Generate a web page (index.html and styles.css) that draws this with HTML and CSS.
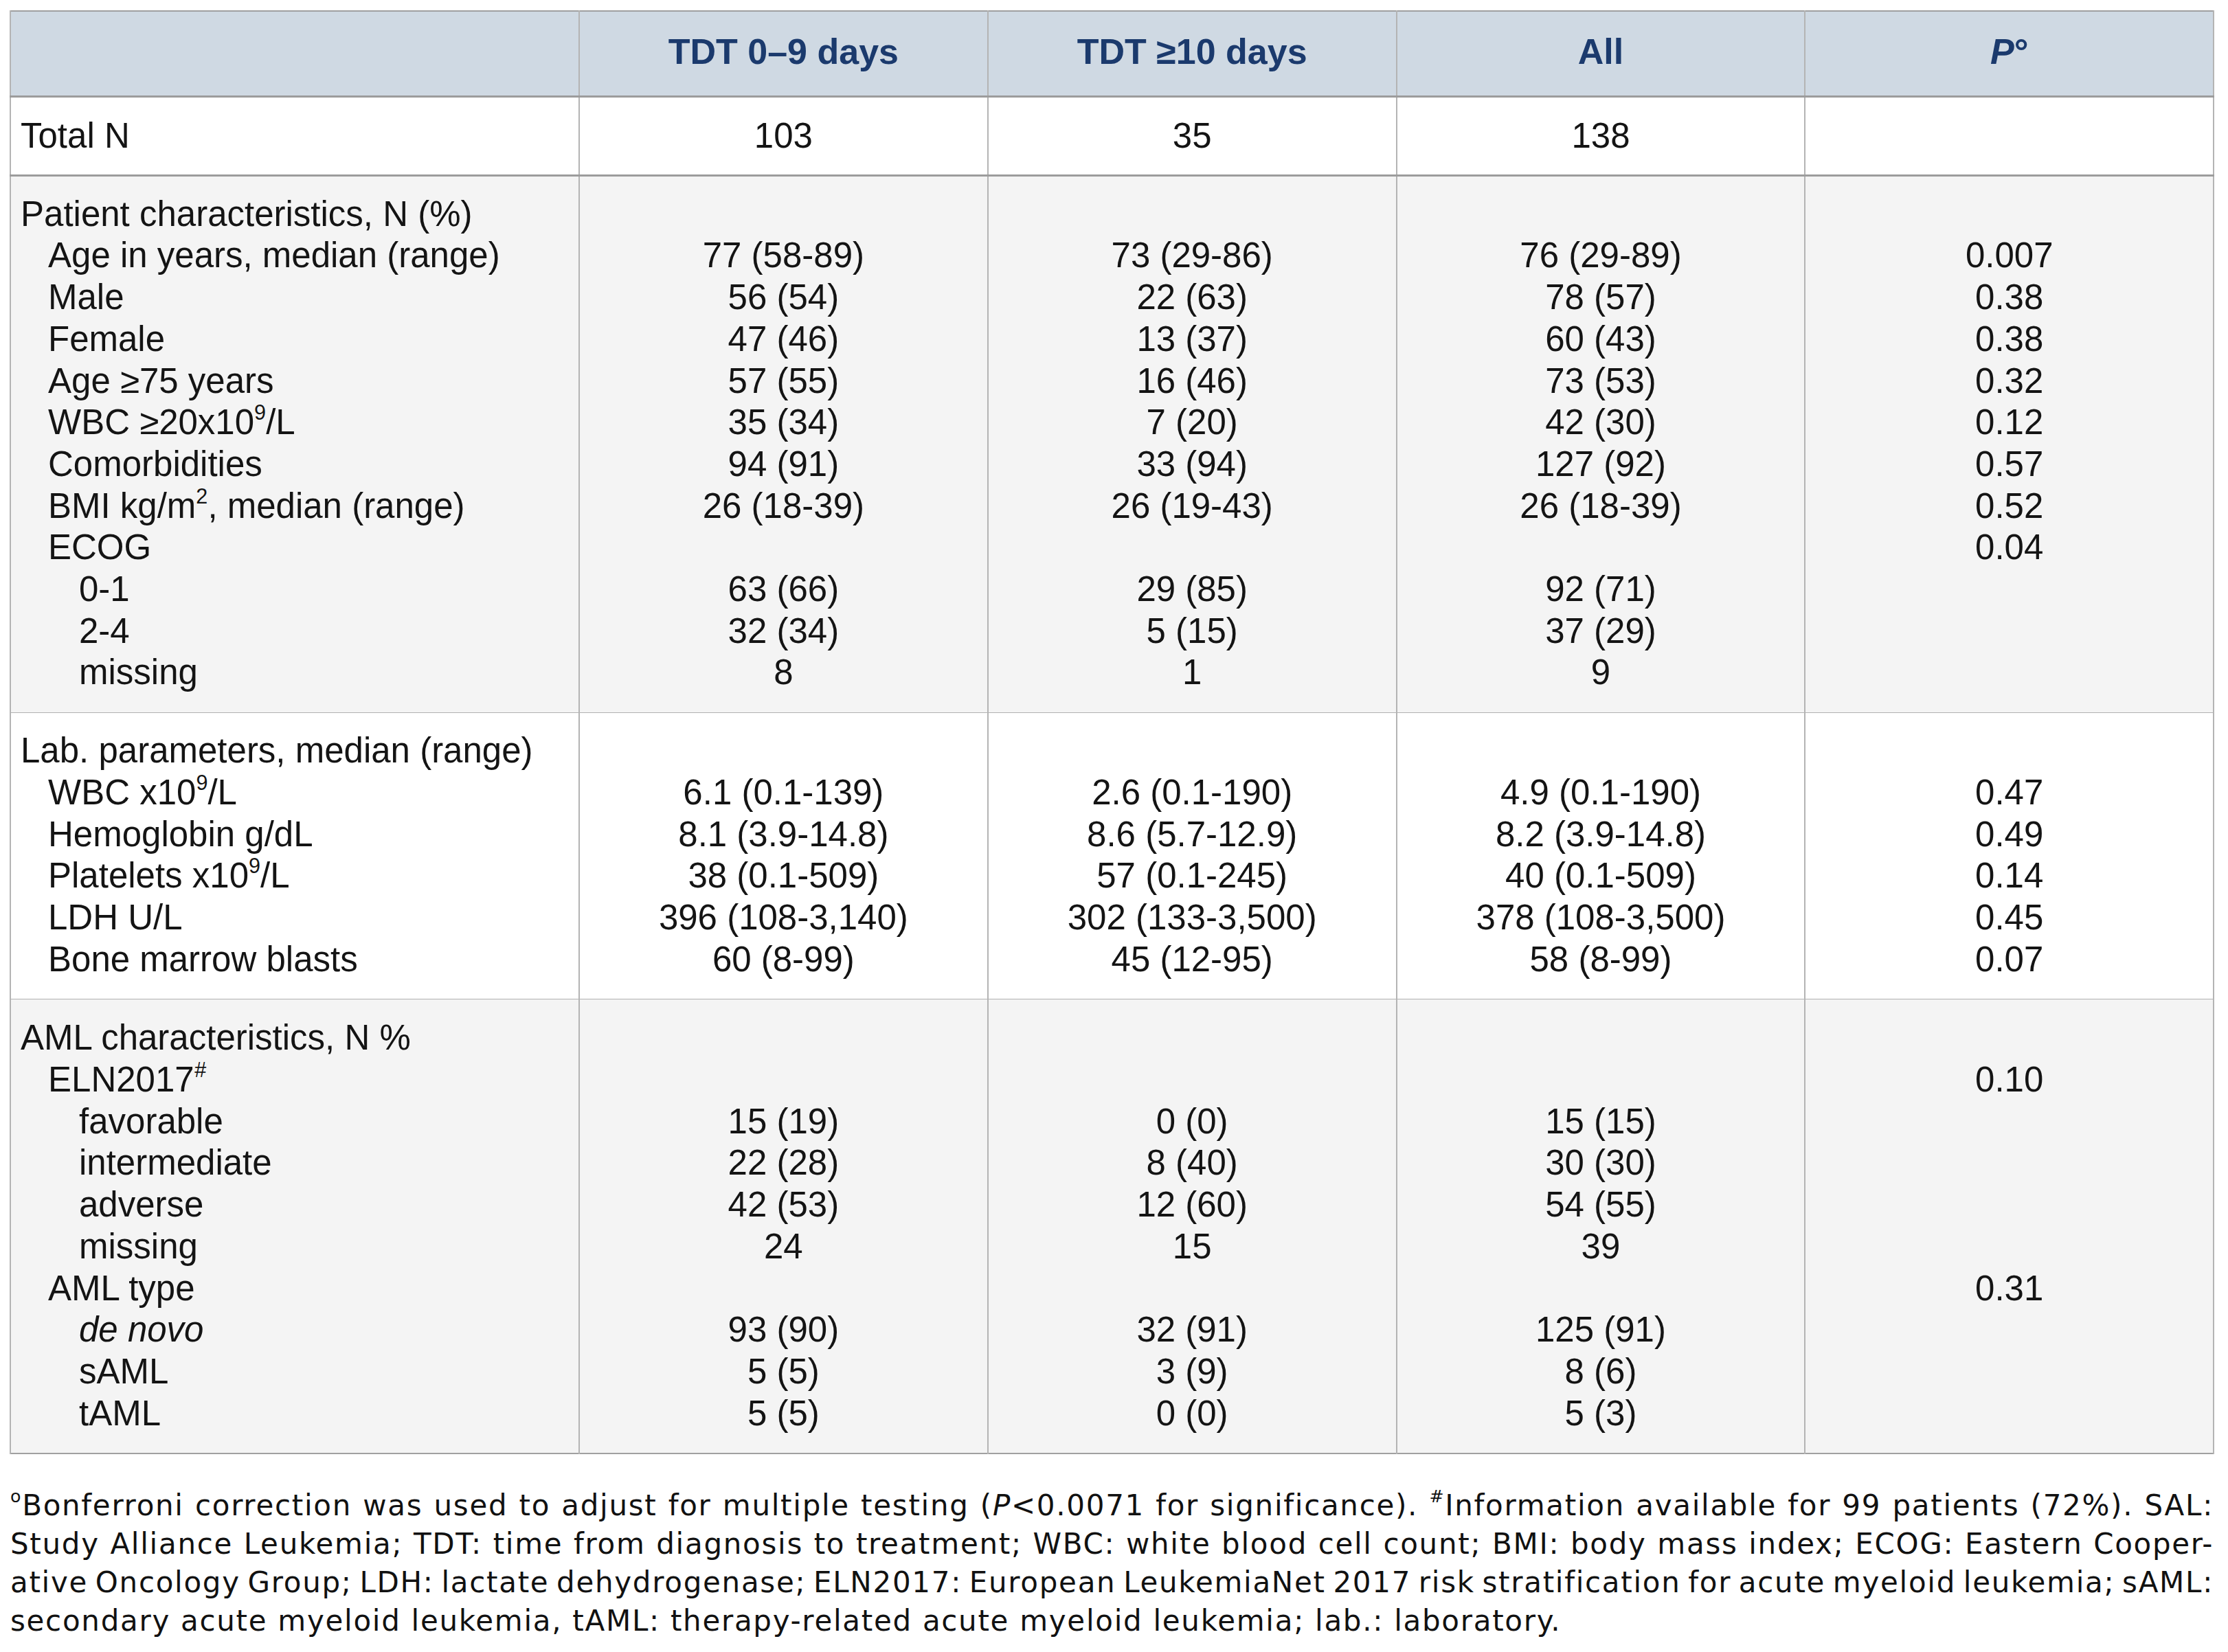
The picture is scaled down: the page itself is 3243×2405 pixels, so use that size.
FILE: index.html
```html
<!DOCTYPE html>
<html lang="en">
<head>
<meta charset="utf-8">
<title>Table</title>
<link rel="stylesheet" href="styles.css">
</head>
<body>
<div class="page">
<table class="data">
  <colgroup>
    <col class="c-label"><col class="c-val"><col class="c-val"><col class="c-val"><col class="c-val">
  </colgroup>
  <thead>
    <tr class="head">
      <th></th>
      <th>TDT 0–9 days</th>
      <th>TDT ≥10 days</th>
      <th>All</th>
      <th><i>P</i>°</th>
    </tr>
  </thead>
  <tbody>
    <tr class="total">
      <td class="label">Total N</td>
      <td>103</td><td>35</td><td>138</td><td></td>
    </tr>
    <tr class="section shaded">
      <td class="label">
        <div class="ln">Patient characteristics, N (%)</div>
        <div class="ln l1">Age in years, median (range)</div>
        <div class="ln l1">Male</div>
        <div class="ln l1">Female</div>
        <div class="ln l1">Age ≥75 years</div>
        <div class="ln l1">WBC ≥20x10<sup class="sup">9</sup>/L</div>
        <div class="ln l1">Comorbidities</div>
        <div class="ln l1">BMI kg/m<sup class="sup">2</sup>, median (range)</div>
        <div class="ln l1">ECOG</div>
        <div class="ln l2">0-1</div>
        <div class="ln l2">2-4</div>
        <div class="ln l2">missing</div>
      </td>
      <td>
        <div class="ln">&nbsp;</div>
        <div class="ln">77 (58-89)</div>
        <div class="ln">56 (54)</div>
        <div class="ln">47 (46)</div>
        <div class="ln">57 (55)</div>
        <div class="ln">35 (34)</div>
        <div class="ln">94 (91)</div>
        <div class="ln">26 (18-39)</div>
        <div class="ln">&nbsp;</div>
        <div class="ln">63 (66)</div>
        <div class="ln">32 (34)</div>
        <div class="ln">8</div>
      </td>
      <td>
        <div class="ln">&nbsp;</div>
        <div class="ln">73 (29-86)</div>
        <div class="ln">22 (63)</div>
        <div class="ln">13 (37)</div>
        <div class="ln">16 (46)</div>
        <div class="ln">7 (20)</div>
        <div class="ln">33 (94)</div>
        <div class="ln">26 (19-43)</div>
        <div class="ln">&nbsp;</div>
        <div class="ln">29 (85)</div>
        <div class="ln">5 (15)</div>
        <div class="ln">1</div>
      </td>
      <td>
        <div class="ln">&nbsp;</div>
        <div class="ln">76 (29-89)</div>
        <div class="ln">78 (57)</div>
        <div class="ln">60 (43)</div>
        <div class="ln">73 (53)</div>
        <div class="ln">42 (30)</div>
        <div class="ln">127 (92)</div>
        <div class="ln">26 (18-39)</div>
        <div class="ln">&nbsp;</div>
        <div class="ln">92 (71)</div>
        <div class="ln">37 (29)</div>
        <div class="ln">9</div>
      </td>
      <td>
        <div class="ln">&nbsp;</div>
        <div class="ln">0.007</div>
        <div class="ln">0.38</div>
        <div class="ln">0.38</div>
        <div class="ln">0.32</div>
        <div class="ln">0.12</div>
        <div class="ln">0.57</div>
        <div class="ln">0.52</div>
        <div class="ln">0.04</div>
        <div class="ln">&nbsp;</div>
        <div class="ln">&nbsp;</div>
        <div class="ln">&nbsp;</div>
      </td>
    </tr>
    <tr class="section">
      <td class="label">
        <div class="ln">Lab. parameters, median (range)</div>
        <div class="ln l1">WBC x10<sup class="sup">9</sup>/L</div>
        <div class="ln l1">Hemoglobin g/dL</div>
        <div class="ln l1">Platelets x10<sup class="sup">9</sup>/L</div>
        <div class="ln l1">LDH U/L</div>
        <div class="ln l1">Bone marrow blasts</div>
      </td>
      <td>
        <div class="ln">&nbsp;</div>
        <div class="ln">6.1 (0.1-139)</div>
        <div class="ln">8.1 (3.9-14.8)</div>
        <div class="ln">38 (0.1-509)</div>
        <div class="ln">396 (108-3,140)</div>
        <div class="ln">60 (8-99)</div>
      </td>
      <td>
        <div class="ln">&nbsp;</div>
        <div class="ln">2.6 (0.1-190)</div>
        <div class="ln">8.6 (5.7-12.9)</div>
        <div class="ln">57 (0.1-245)</div>
        <div class="ln">302 (133-3,500)</div>
        <div class="ln">45 (12-95)</div>
      </td>
      <td>
        <div class="ln">&nbsp;</div>
        <div class="ln">4.9 (0.1-190)</div>
        <div class="ln">8.2 (3.9-14.8)</div>
        <div class="ln">40 (0.1-509)</div>
        <div class="ln">378 (108-3,500)</div>
        <div class="ln">58 (8-99)</div>
      </td>
      <td>
        <div class="ln">&nbsp;</div>
        <div class="ln">0.47</div>
        <div class="ln">0.49</div>
        <div class="ln">0.14</div>
        <div class="ln">0.45</div>
        <div class="ln">0.07</div>
      </td>
    </tr>
    <tr class="section shaded">
      <td class="label">
        <div class="ln">AML characteristics, N %</div>
        <div class="ln l1">ELN2017<sup class="sup hash">#</sup></div>
        <div class="ln l2">favorable</div>
        <div class="ln l2">intermediate</div>
        <div class="ln l2">adverse</div>
        <div class="ln l2">missing</div>
        <div class="ln l1">AML type</div>
        <div class="ln l2"><i>de novo</i></div>
        <div class="ln l2">sAML</div>
        <div class="ln l2">tAML</div>
      </td>
      <td>
        <div class="ln">&nbsp;</div>
        <div class="ln">&nbsp;</div>
        <div class="ln">15 (19)</div>
        <div class="ln">22 (28)</div>
        <div class="ln">42 (53)</div>
        <div class="ln">24</div>
        <div class="ln">&nbsp;</div>
        <div class="ln">93 (90)</div>
        <div class="ln">5 (5)</div>
        <div class="ln">5 (5)</div>
      </td>
      <td>
        <div class="ln">&nbsp;</div>
        <div class="ln">&nbsp;</div>
        <div class="ln">0 (0)</div>
        <div class="ln">8 (40)</div>
        <div class="ln">12 (60)</div>
        <div class="ln">15</div>
        <div class="ln">&nbsp;</div>
        <div class="ln">32 (91)</div>
        <div class="ln">3 (9)</div>
        <div class="ln">0 (0)</div>
      </td>
      <td>
        <div class="ln">&nbsp;</div>
        <div class="ln">&nbsp;</div>
        <div class="ln">15 (15)</div>
        <div class="ln">30 (30)</div>
        <div class="ln">54 (55)</div>
        <div class="ln">39</div>
        <div class="ln">&nbsp;</div>
        <div class="ln">125 (91)</div>
        <div class="ln">8 (6)</div>
        <div class="ln">5 (3)</div>
      </td>
      <td>
        <div class="ln">&nbsp;</div>
        <div class="ln">0.10</div>
        <div class="ln">&nbsp;</div>
        <div class="ln">&nbsp;</div>
        <div class="ln">&nbsp;</div>
        <div class="ln">&nbsp;</div>
        <div class="ln">0.31</div>
        <div class="ln">&nbsp;</div>
        <div class="ln">&nbsp;</div>
        <div class="ln">&nbsp;</div>
      </td>
    </tr>
  </tbody>
</table>
<div class="notes">
  <span class="nl"><sup class="nsup">o</sup>Bonferroni correction was used to adjust for multiple testing (<i>P</i>&lt;0.0071 for significance). <sup class="nsup">#</sup>Information available for 99 patients (72%). SAL:</span>
  <span class="nl">Study Alliance Leukemia; TDT: time from diagnosis to treatment; WBC: white blood cell count; BMI: body mass index; ECOG: Eastern Cooper-</span>
  <span class="nl">ative Oncology Group; LDH: lactate dehydrogenase; ELN2017: European LeukemiaNet 2017 risk stratification for acute myeloid leukemia; sAML:</span>
  <span class="nl last">secondary acute myeloid leukemia, tAML: therapy-related acute myeloid leukemia; lab.: laboratory.</span>
</div>
</div>
</body>
</html>
```

FILE: styles.css
```css
html, body {
  margin: 0;
  padding: 0;
  background: #ffffff;
}

.page {
  padding: 15px 20px 0 14px;
}

.data {
  width: 3209px;
  border-collapse: collapse;
  border: 2px solid #a0a0a0;
  font-family: "Liberation Sans", Arial, sans-serif;
  font-size: 51px;
  color: #141414;
}

.c-label { width: 828px; }
.c-val { width: 595px; }

.data th,
.data td {
  border-left: 2px solid #b4b4b4;
  border-right: 2px solid #b4b4b4;
  text-align: center;
  vertical-align: top;
  padding: 0 16px;
}

.head th {
  background: #cfd9e3;
  color: #1b3a6d;
  font-weight: bold;
  font-size: 52px;
  line-height: 60px;
  padding-top: 28px;
  padding-bottom: 34px;
  border-bottom: 3px solid #9c9c9c;
}

.total td {
  background: #ffffff;
  line-height: 60.7px;
  padding-top: 26px;
  padding-bottom: 25px;
  border-bottom: 3px solid #9c9c9c;
}

.section td {
  background: #ffffff;
  padding-top: 25px;
  padding-bottom: 27px;
  border-bottom: 1px solid #b0b0b0;
}

.section.shaded td {
  background: #f4f4f4;
}

.section:last-child td {
  padding-top: 26px;
}

.data td.label {
  text-align: left;
  padding-left: 14px;
}

.ln {
  line-height: 60.7px;
  white-space: nowrap;
}

.l1 { padding-left: 40px; }
.l2 { padding-left: 85px; }

.sup {
  font-size: 0.6em;
  line-height: 0;
  vertical-align: 0.7em;
}

.sup.hash {
  font-style: italic;
}

.notes {
  margin-top: 47px;
  width: 3207px;
  padding-left: 1px;
  font-family: "DejaVu Sans", "Noto Sans", sans-serif;
  font-size: 42px;
  letter-spacing: 1.7px;
  line-height: 56px;
  color: #111111;
}

.nl {
  display: block;
  word-spacing: -12px;
  text-align: justify;
  text-align-last: justify;
}

.nl.last {
  word-spacing: 0;
  text-align-last: left;
}

.nsup {
  font-size: 0.6em;
  line-height: 0;
  vertical-align: 0.75em;
}
```
